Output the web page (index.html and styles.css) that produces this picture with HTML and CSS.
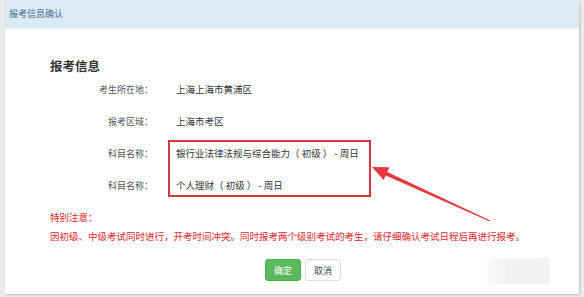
FILE: index.html
```html
<!DOCTYPE html>
<html>
<head>
  <title>报考信息确认</title>
  <link rel="stylesheet" href="styles.css">
</head>
<body>
  <div class="dialog">
    <div class="dialog-head">报考信息确认</div>

    <div class="dialog-body">
      <h2 class="section-title">报考信息</h2>

      <div class="info-row">
        <span class="info-label">考生所在地：</span>
        <span class="info-value">上海上海市黄浦区</span>
      </div>
      <div class="info-row">
        <span class="info-label">报考区域：</span>
        <span class="info-value">上海市考区</span>
      </div>
      <div class="info-row">
        <span class="info-label">科目名称：</span>
        <span class="info-value">银行业法律法规与综合能力（ 初级 ） - 周日</span>
      </div>
      <div class="info-row">
        <span class="info-label">科目名称：</span>
        <span class="info-value">个人理财（ 初级 ） - 周日</span>
      </div>

      <p class="notice-title">特别注意：</p>
      <p class="notice-text">因初级、中级考试同时进行，开考时间冲突。同时报考两个级别考试的考生，请仔细确认考试日程后再进行报考。</p>

      <div class="btn-row">
        <button class="ok-btn">确定</button>
        <button class="cancel-btn">取消</button>
      </div>
    </div>

    <!-- annotation drawn over the screenshot -->
    <div class="mark-box"></div>
    <svg class="mark-arrow" width="584" height="297" viewBox="0 0 584 297">
      <polygon fill="#e8383d" points="372,167 389.4,167.3 387.3,171.9 490.2,220.5 489.8,221.5 385.7,175.5 383.6,180.1"/>
    </svg>
    <div class="watermark"></div>
  </div>
</body>
</html>
```

FILE: styles.css
```css
* {
  margin: 0;
  padding: 0;
  box-sizing: border-box;
}

body {
  font-family: "Microsoft YaHei", "Noto Sans CJK SC", sans-serif;
  background-color: #ebebeb;
  width: 584px;
  height: 297px;
  overflow: hidden;
}

.dialog {
  position: relative;
  margin: 1px 5px 0 5px;
  height: 293px;
  background-color: #fff;
  box-shadow: 1px 1px 2px rgba(0, 0, 0, 0.2);
}

.dialog-head {
  height: 28px;
  line-height: 26px;
  padding-left: 4px;
  font-size: 9px;
  color: #3b6d8c;
  background-color: #dbebf5;
  border-bottom: 1px solid #e6f0f6;
}

.dialog-body {
  padding: 30px 0 0 45px;
}

.section-title {
  font-size: 12.5px;
  line-height: 14px;
  font-weight: bold;
  color: #333;
}

.info-row {
  display: grid;
  grid-template-columns: 103px 1fr;
  column-gap: 23px;
  height: 32px;
  align-items: center;
}

.info-label {
  text-align: right;
  font-size: 9px;
  color: #555;
}

.info-value {
  font-size: 9.5px;
  color: #333;
}

.notice-title {
  margin-top: 8px;
  font-size: 9.5px;
  line-height: 16px;
  color: #e4262b;
}

.notice-text {
  margin-top: 3px;
  font-size: 9.5px;
  line-height: 16px;
  color: #e4262b;
}

.btn-row {
  display: flex;
  gap: 4px;
  margin-top: 15px;
  padding-left: 215px;
}

.ok-btn, .cancel-btn {
  width: 36px;
  height: 22px;
  font-family: inherit;
  font-size: 9px;
  border-radius: 3px;
}

.ok-btn {
  border: 1px solid #4cae4c;
  background-color: #5cb85c;
  color: #fff;
}

.cancel-btn {
  border: 1px solid #dcdcdc;
  background-color: #fff;
  color: #444;
}

.mark-box {
  position: absolute;
  left: 163px;
  top: 139px;
  width: 203px;
  height: 57px;
  border: 2px solid #d8363d;
}

.mark-arrow {
  position: absolute;
  left: -5px;
  top: -1px;
}

.watermark {
  position: absolute;
  left: 475px;
  top: 257px;
  width: 70px;
  height: 26px;
  background: linear-gradient(to right, #fff, #f1f1f1 40%, #f3f3f3);
}
```
